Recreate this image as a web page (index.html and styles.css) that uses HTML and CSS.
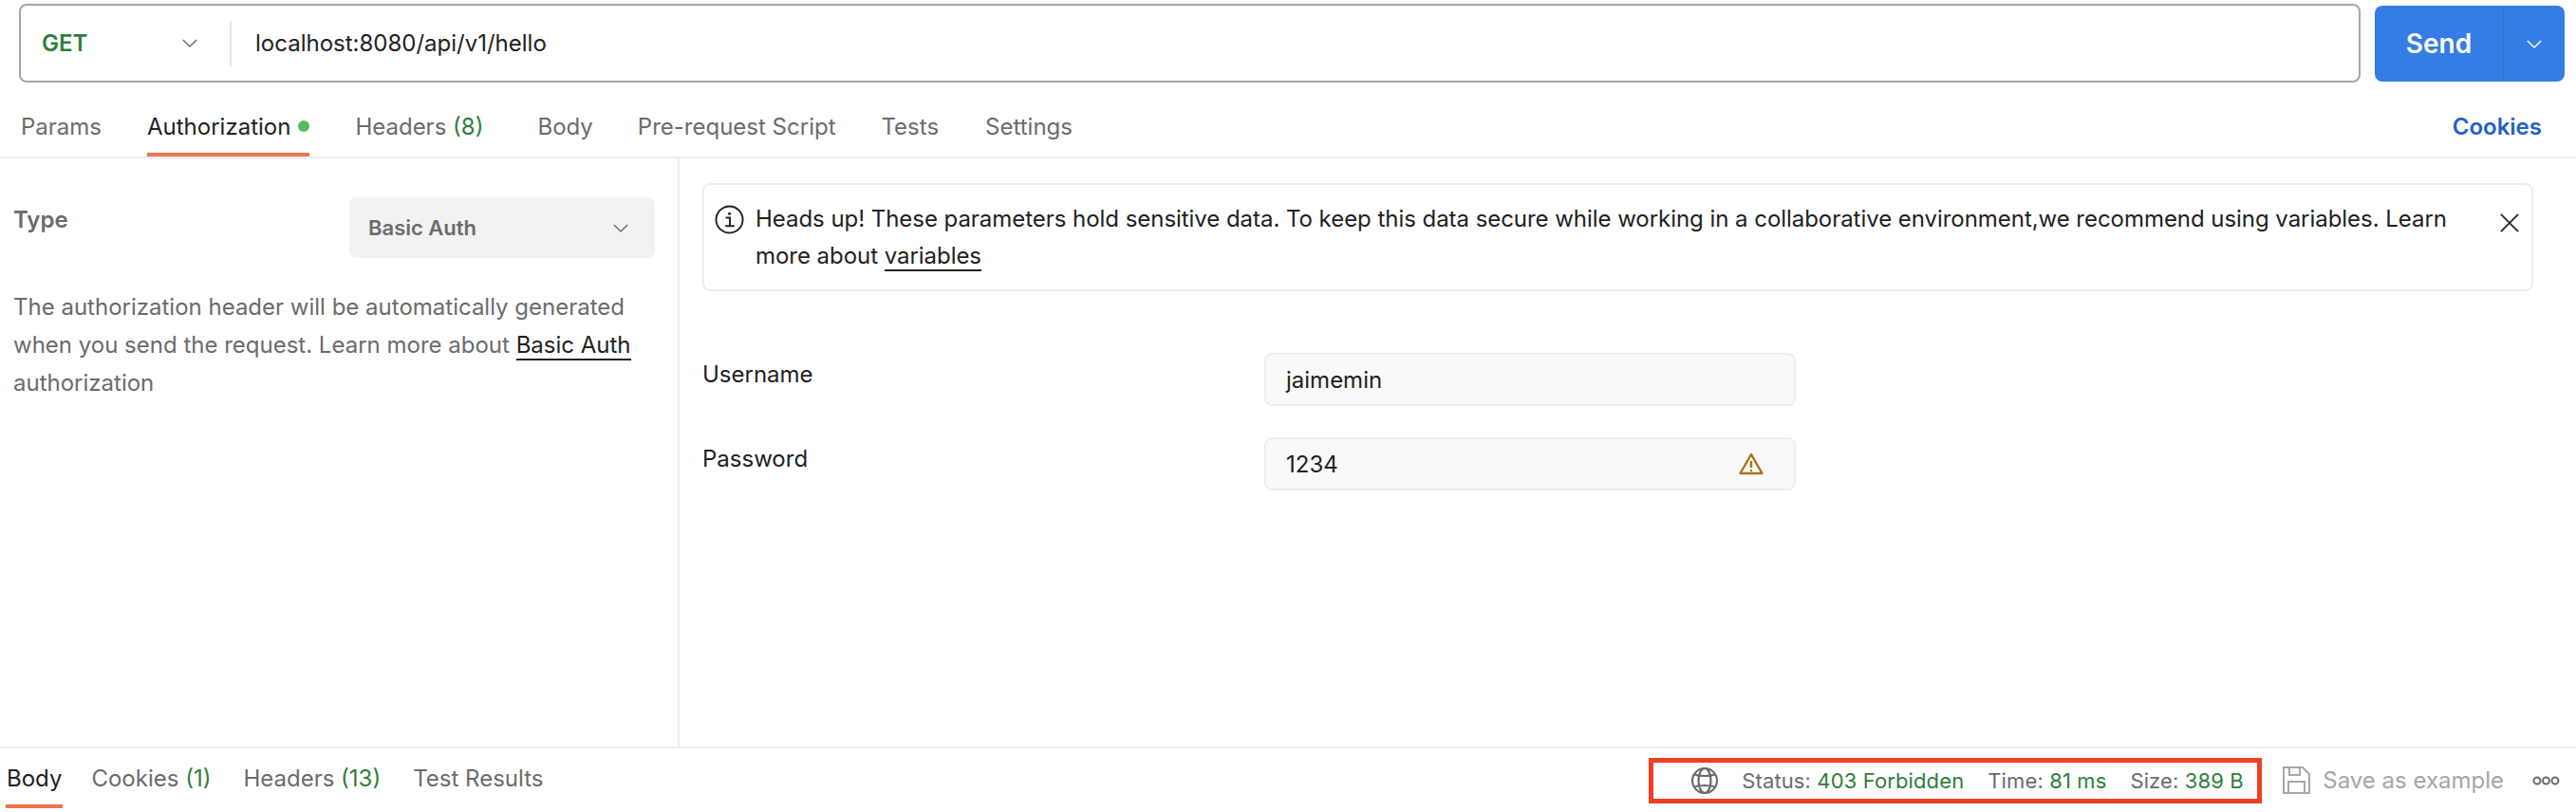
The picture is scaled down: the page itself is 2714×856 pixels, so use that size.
FILE: index.html
```html
<!DOCTYPE html>
<html lang="en">
<head>
<meta charset="utf-8">
<title>Postman request</title>
<link rel="stylesheet" href="styles.css">
</head>
<body>
<div class="app">
  <div class="urlrow">
    <div class="urlbox">
      <div class="method"><span class="method-name">GET</span>
        <svg class="chev" viewBox="0 0 20 12"><path d="M2 2l8 8 8-8"/></svg></div>
      <div class="url">localhost:8080/api/v1/hello</div>
    </div>
    <div class="send">
      <div class="send-main">Send</div>
      <div class="send-more"><svg class="chev chev-white" viewBox="0 0 20 12"><path d="M2 2l8 8 8-8"/></svg></div>
    </div>
  </div>
  <div class="reqtabs">
    <div class="tab t-params">Params</div>
    <div class="tab active t-auth">Authorization<span class="dot"></span></div>
    <div class="tab t-headers">Headers <span class="count">(8)</span></div>
    <div class="tab t-body">Body</div>
    <div class="tab t-pre">Pre-request Script</div>
    <div class="tab t-tests">Tests</div>
    <div class="tab t-settings">Settings</div>
    <div class="cookies">Cookies</div>
  </div>
  <div class="main">
    <aside class="side">
      <div class="type-row">
        <div class="type-label">Type</div>
        <div class="select"><span>Basic Auth</span>
          <svg class="chev" viewBox="0 0 20 12"><path d="M2 2l8 8 8-8"/></svg></div>
      </div>
      <p class="desc">The authorization header will be automatically generated when you send the request. Learn more about <a class="link">Basic Auth</a> authorization</p>
    </aside>
    <section class="content">
      <div class="notice">
        <svg class="info" viewBox="0 0 32 32"><circle cx="16" cy="16" r="14.5"/><circle class="fill" cx="16" cy="9.5" r="1.6"/><path d="M12 14h4.500v9M11.500 23h10"/></svg>
        <p class="notice-text">Heads up! These parameters hold sensitive data. To keep this data secure while working in a collaborative environment,we recommend using variables. Learn more about <a class="link">variables</a></p>
        <svg class="close" viewBox="0 0 22 22"><path d="M1 1l20 20M21 1L1 21"/></svg>
      </div>
      <div class="field-row">
        <label class="field-label">Username</label>
        <div class="field">jaimemin</div>
      </div>
      <div class="field-row">
        <label class="field-label">Password</label>
        <div class="field"><span>1234</span>
          <svg class="warn" viewBox="0 0 26 24"><path d="M13 2L1.500 22h23z"/><path d="M13 9v7"/><circle cx="13" cy="19" r="1.200"/></svg></div>
      </div>
    </section>
  </div>
  <div class="restabs">
    <div class="rtab active r-body">Body</div>
    <div class="rtab r-cookies">Cookies <span class="count">(1)</span></div>
    <div class="rtab r-headers">Headers <span class="count">(13)</span></div>
    <div class="rtab r-tests">Test Results</div>
    <div class="status-box">
      <svg class="globe" viewBox="0 0 28 28"><circle cx="14" cy="14" r="13"/><ellipse cx="14" cy="14" rx="6.500" ry="13"/><path d="M3 7.500c6 2 16 2 22 0M3 20.500c6-2 16-2 22 0"/></svg>
      <span class="meta s-status">Status: <b class="ok">403 Forbidden</b></span>
      <span class="meta s-time">Time: <b class="ok">81 ms</b></span>
      <span class="meta s-size">Size: <b class="ok">389 B</b></span>
    </div>
    <svg class="save" viewBox="0 0 29 29"><path d="M1 1h20l7 7v20H1z"/><path d="M7 1v8h11V1M6 28V16h17v12"/></svg>
    <span class="save-text">Save as example</span>
    <svg class="more" viewBox="0 0 29 10"><circle cx="5" cy="5" r="3.500"/><circle cx="14.500" cy="5" r="3.500"/><circle cx="24" cy="5" r="3.500"/></svg>
  </div>
</div>
</body>
</html>
```
FILE: styles.css
```css
* { box-sizing: border-box; }
html, body { margin: 0; padding: 0; background: #fff; }
body { font-family: Inter, "Liberation Sans", sans-serif; font-size: 24px; color: #212121; }
.app { width: 2714px; height: 856px; display: flex; flex-direction: column; overflow: hidden; }

.chev { width: 18px; height: 11px; fill: none; stroke: #6b6b6b; stroke-width: 1.6; flex: none; }
.chev-white { stroke: #fff; }

.urlrow { height: 91px; padding: 4px 12px 0 20px; display: flex; gap: 15px; flex: none; }
.urlbox { width: 2467px; height: 83px; border: 2px solid #a6a6a6; border-radius: 8px; display: flex; align-items: center; }
.method { width: 222px; height: 48px; padding: 0 33px 0 22px; border-right: 2px solid #e6e6e6; display: flex; align-items: center; justify-content: space-between; }
.method-name { color: #2f7d3b; font-weight: 600; }
.url { padding-left: 25px; color: #212121; }
.send { width: 200px; height: 80px; margin-top: 2px; background: #347de5; border-radius: 8px; display: flex; color: #fff; }
.send-main { width: 136px; border-right: 1px solid #2c6fd0; display: flex; align-items: center; justify-content: center; font-size: 28px; font-weight: 600; }
.send-more { flex: 1; display: flex; align-items: center; justify-content: center; }

.reqtabs { height: 76px; flex: none; display: flex; align-items: stretch; border-bottom: 2px solid #ededed; padding-left: 22px; }
.tab { color: #6b6b6b; display: flex; align-items: center; height: 74px; padding-top: 10px; position: relative; white-space: pre; }
.tab.active { color: #212121; }
.tab.active::after { content: ""; position: absolute; left: 0; right: 0; bottom: 0; height: 4px; background: #ef7449; }
.t-auth { margin-left: 48px; }
.t-headers { margin-left: 48px; }
.t-body { margin-left: 57px; }
.t-pre { margin-left: 47px; }
.t-tests { margin-left: 48px; }
.t-settings { margin-left: 49px; }
.dot { width: 12px; height: 12px; border-radius: 50%; background: #55bb63; margin-left: 8px; }
.count { color: #2f7d3b; }
.cookies { margin-left: auto; margin-right: 36px; color: #2360c8; font-weight: 600; display: flex; align-items: center; padding-top: 10px; }

.main { flex: 1; display: flex; min-height: 0; border-bottom: 2px solid #ededed; }
.side { width: 716px; flex: none; border-right: 2px solid #ededed; padding: 41px 24px 0 14px; }
.type-row { display: flex; justify-content: space-between; align-items: flex-start; }
.type-label { color: #6b6b6b; font-weight: 600; line-height: 48px; }
.select { width: 322px; height: 64px; background: #f2f2f2; border-radius: 8px; display: flex; align-items: center; justify-content: space-between; padding: 0 27px 0 20px; color: #6b6b6b; font-weight: 600; font-size: 22px; }
.desc { margin: 32px -4px 0 0; line-height: 40px; color: #6b6b6b; }
.link { color: #212121; border-bottom: 2px solid #212121; }

.content { flex: 1; padding: 26px 45px 0 24px; }
.notice { height: 114px; border: 2px solid #ededed; border-radius: 8px; padding: 16px 13px 0 11px; display: flex; align-items: flex-start; }
.info { width: 31px; height: 31px; flex: none; fill: none; stroke: #212121; stroke-width: 2; margin-top: 5px; }
.info .fill { fill: #212121; stroke: none; }
.notice-text { margin: 0 0 0 12px; line-height: 39px; width: 1790px; letter-spacing: -0.045px; }
.close { width: 20px; height: 22px; margin: 13px 0 0 auto; fill: none; stroke: #212121; stroke-width: 1.8; flex: none; }
.field-row { display: flex; align-items: flex-start; height: 56px; }
.notice + .field-row { margin-top: 65px; }
.field-row + .field-row { margin-top: 33px; }
.field-label { width: 592px; line-height: 45px; color: #212121; }
.field { width: 560px; height: 56px; background: #f9f9f9; border: 2px solid #ededed; border-radius: 8px; padding: 0 32px 0 21px; display: flex; align-items: center; justify-content: space-between; color: #212121; }
.warn { width: 26px; height: 24px; fill: none; stroke: #a8741a; stroke-width: 2.4; stroke-linejoin: round; }
.warn circle { fill: #a8741a; stroke: none; }

.restabs { height: 67px; flex: none; display: flex; align-items: center; padding-left: 7px; }
.rtab { color: #6b6b6b; height: 67px; padding-bottom: 5px; display: flex; align-items: center; white-space: pre; position: relative; }
.rtab.active { color: #212121; }
.rtab.active::after { content: ""; position: absolute; left: -1px; right: -1px; bottom: 4px; height: 4px; background: #ef7449; }
.r-cookies { margin-left: 31px; }
.r-headers { margin-left: 34px; }
.r-tests { margin-left: 34px; }
.status-box { margin-left: auto; width: 646px; height: 48px; border: 5px solid #ee4024; display: flex; align-items: center; padding-left: 40px; font-size: 22px; letter-spacing: 0.12px; color: #6b6b6b; white-space: pre; }
.globe { width: 28px; height: 28px; fill: none; stroke: #6b6b6b; stroke-width: 2.200; flex: none; }
.meta { flex: none; }
.meta b { font-weight: 400; }
.ok { color: #2f7d3b; }
.s-status { margin-left: 25px; }
.s-time { margin-left: 25px; }
.s-size { margin-left: 25px; }
.save { width: 29px; height: 29px; margin-left: 22px; fill: none; stroke: #a6a6a6; stroke-width: 2; flex: none; }
.save-text { margin-left: 13px; color: #a6a6a6; font-size: 24px; }
.more { width: 29px; height: 10px; margin: 0 17px 0 30px; fill: none; stroke: #6b6b6b; stroke-width: 2; flex: none; }
```
